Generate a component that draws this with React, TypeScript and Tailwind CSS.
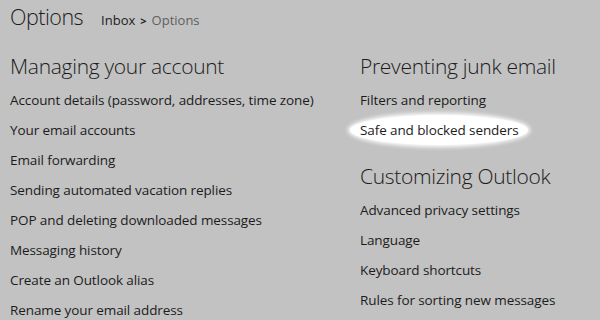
const account = [
  "Account details (password, addresses, time zone)",
  "Your email accounts",
  "Email forwarding",
  "Sending automated vacation replies",
  "POP and deleting downloaded messages",
  "Messaging history",
  "Create an Outlook alias",
  "Rename your email address",
];

const junk = ["Filters and reporting", "Safe and blocked senders"];

const customizing = [
  "Advanced privacy settings",
  "Language",
  "Keyboard shortcuts",
  "Rules for sorting new messages",
];

function Item({ label, circled }: { label: string; circled?: boolean }) {
  return (
    <div className="flex h-[30px] items-center">
      <span
        className={
          circled
            ? "-ml-[10px] rounded-[50%] bg-white px-[10px] py-[5px] shadow-[0_0_4px_2px_#ffffff]"
            : ""
        }
      >
        {label}
      </span>
    </div>
  );
}

export default function App() {
  return (
    <div
      className="h-[320px] w-[600px] overflow-hidden bg-[#c2c2c2] text-[#1c1c1c]"
      style={{ fontFamily: '"Open Sans", "Noto Sans", sans-serif' }}
    >
      <div className="flex items-baseline px-[10px]">
        <h1 className="text-[21.5px] font-light leading-[33px] tracking-[-0.5px]">Options</h1>
        <div className="ml-[18px] flex items-center gap-[5px] text-[13px]">
          <span>Inbox</span>
          <span className="text-[11px] font-bold">&gt;</span>
          <span className="text-[#5f5f5f]">Options</span>
        </div>
      </div>

      <div className="mt-[18px] grid grid-cols-[350px_1fr] pl-[10px] text-[13.5px] tracking-[-0.1px]">
        <div>
          <h2 className="mb-[4px] h-[30px] text-[21px] font-light leading-[30px] tracking-[-0.3px]">
            Managing your account
          </h2>
          {account.map((a) => (
            <Item key={a} label={a} />
          ))}
        </div>
        <div>
          <h2 className="mb-[4px] h-[30px] text-[21px] font-light leading-[30px] tracking-[-0.3px]">
            Preventing junk email
          </h2>
          {junk.map((a, i) => (
            <Item key={a} label={a} circled={i === 1} />
          ))}
          <h2 className="mb-[4px] mt-[16px] h-[30px] text-[21px] font-light leading-[30px] tracking-[-0.3px]">
            Customizing Outlook
          </h2>
          {customizing.map((a) => (
            <Item key={a} label={a} />
          ))}
        </div>
      </div>
    </div>
  );
}
